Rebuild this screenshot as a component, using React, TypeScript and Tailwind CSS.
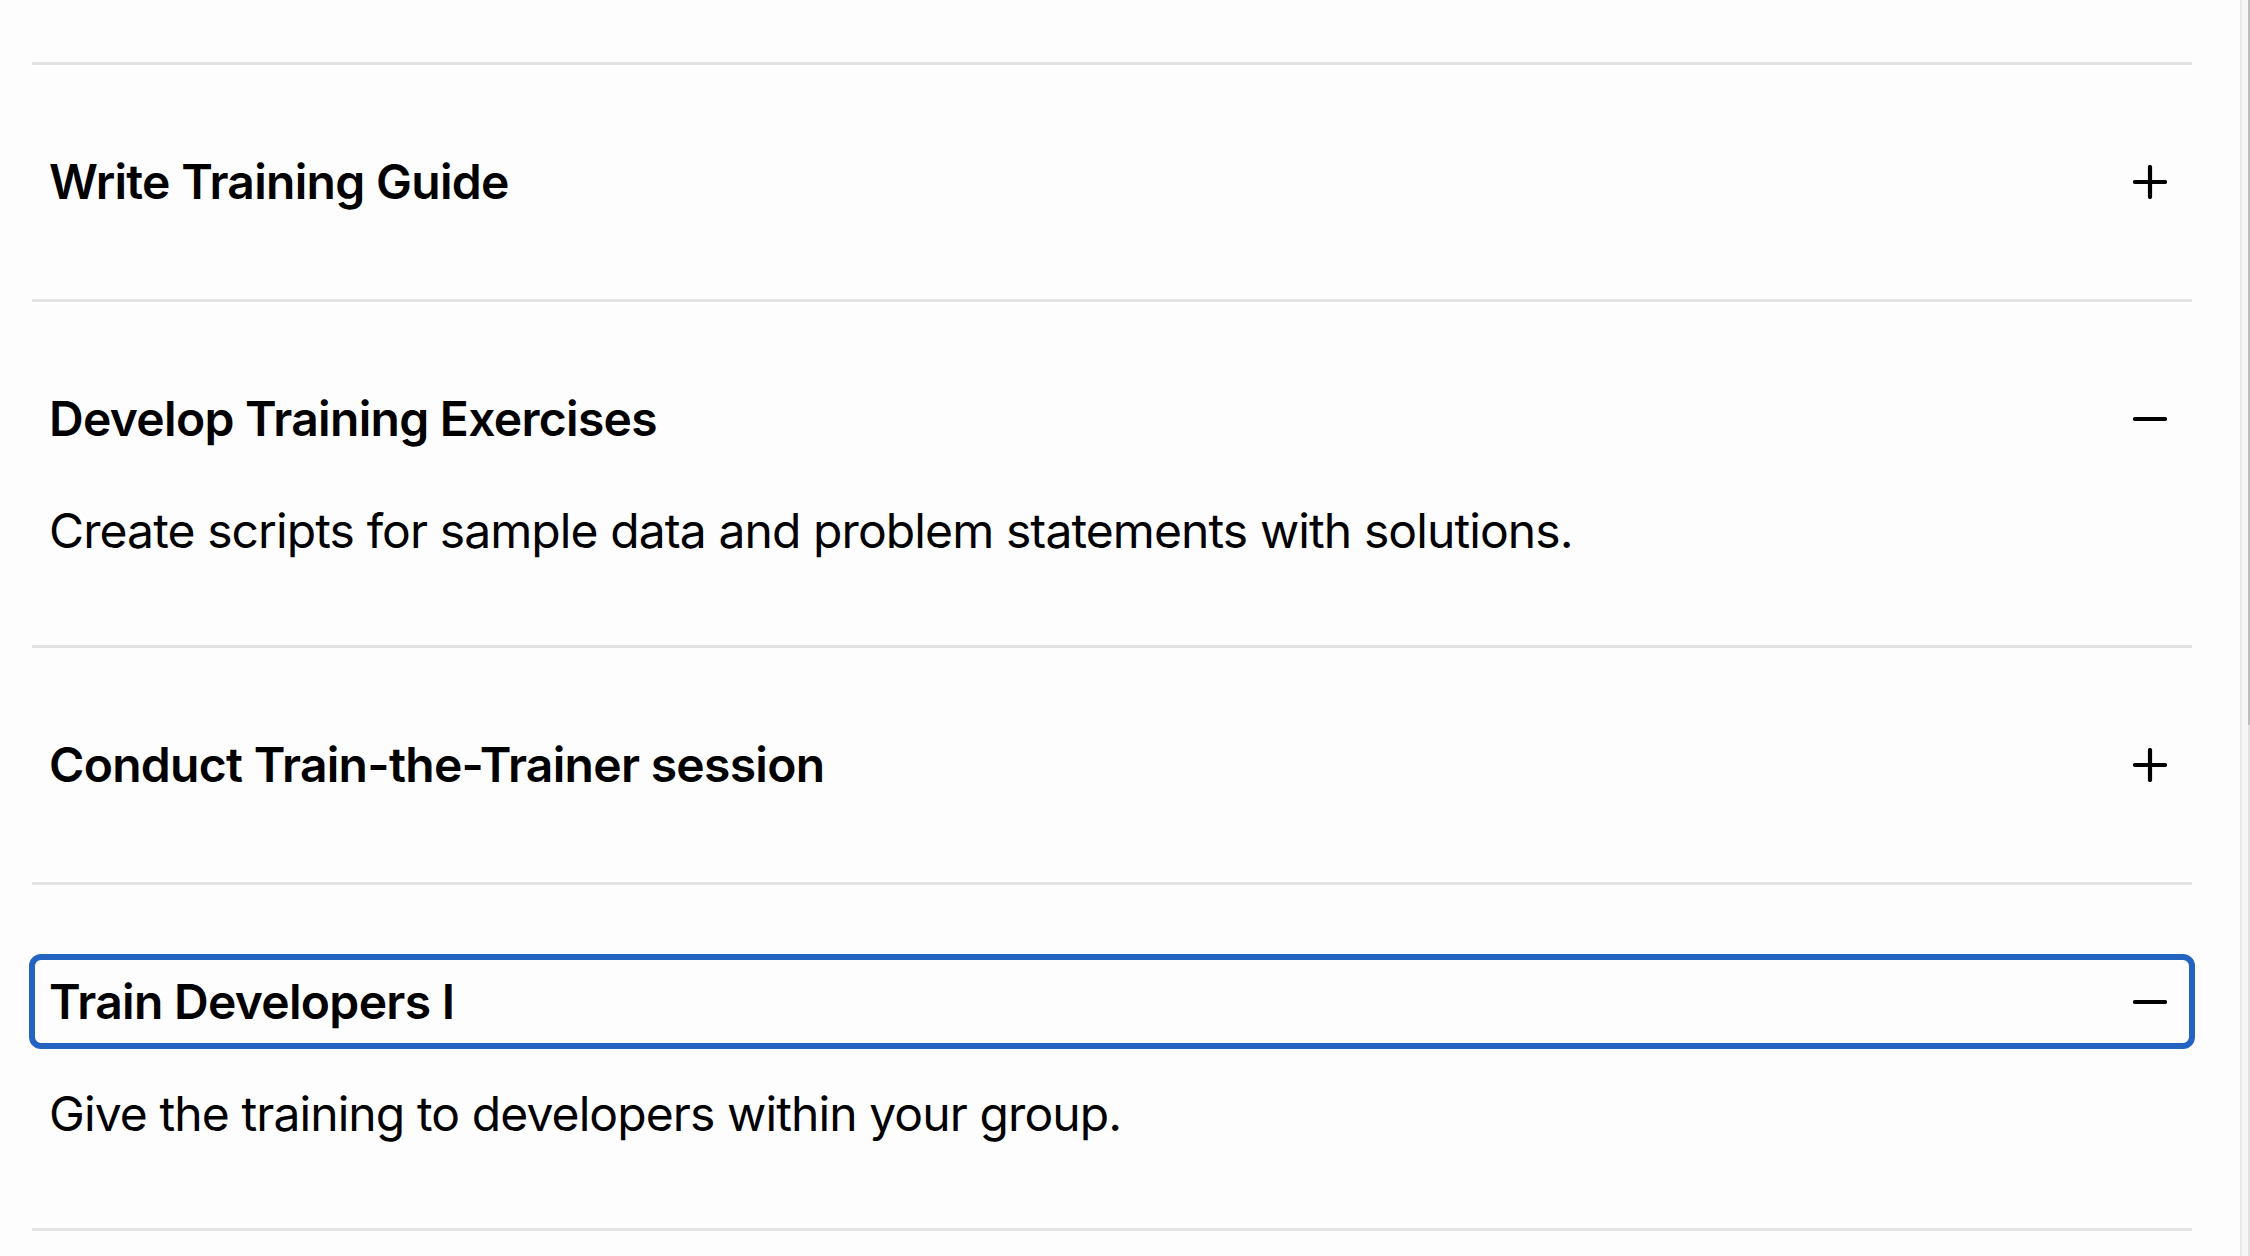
import React from "react";

type Item = { title: string; desc?: string; open: boolean; focused?: boolean };

const items: Item[] = [
  { title: "Write Training Guide", open: false },
  {
    title: "Develop Training Exercises",
    desc: "Create scripts for sample data and problem statements with solutions.",
    open: true,
  },
  { title: "Conduct Train-the-Trainer session", open: false },
  {
    title: "Train Developers I",
    desc: "Give the training to developers within your group.",
    open: true,
    focused: true,
  },
];

function PlusIcon() {
  return (
    <svg width="34" height="34" viewBox="0 0 34 34" fill="none">
      <line x1="17" y1="2" x2="17" y2="32" stroke="#000" strokeWidth="4.2" strokeLinecap="round" />
      <line x1="2" y1="17" x2="32" y2="17" stroke="#000" strokeWidth="4.2" strokeLinecap="round" />
    </svg>
  );
}

function MinusIcon() {
  return (
    <svg width="34" height="34" viewBox="0 0 34 34" fill="none">
      <line x1="2" y1="17" x2="32" y2="17" stroke="#000" strokeWidth="4.2" strokeLinecap="round" />
    </svg>
  );
}

export default function App() {
  return (
    <div
      className="flex w-full h-[1256px] overflow-hidden bg-[#fdfdfd] text-black"
      style={{ fontFamily: "Inter, 'Noto Sans', sans-serif" }}
    >
      <div className="flex-1 pl-[32px] pr-[48px] pt-[62px]">
        <div className="border-t-[3px] border-[#e3e3e3]">
          {items.map((it) => (
            <div key={it.title} className="border-b-[3px] border-[#e3e3e3] pt-[69px] pb-[70px]">
              <div
                className={
                  "mx-[-3px] h-[95px] flex items-center justify-between rounded-[12px] border-[6px] pl-[14px] pr-[22px] " +
                  (it.focused ? "border-[#2464c0]" : "border-transparent")
                }
              >
                <span className="text-[48px] leading-[60px] font-semibold tracking-[-0.7px]">{it.title}</span>
                {it.open ? <MinusIcon /> : <PlusIcon />}
              </div>
              {it.open && it.desc ? (
                <div className="mt-[21px] pl-[17px] text-[48px] leading-[88px] font-normal tracking-[-0.9px]">
                  {it.desc}
                </div>
              ) : null}
            </div>
          ))}
        </div>
      </div>
      <div className="w-[10px] h-full flex border-l-[2px] border-[#e8e8e8] bg-[#f6f6f6]">
        <div className="flex-1" />
        <div className="w-[2px] flex flex-col">
          <div className="h-[725px] bg-[#bdbdbd]" />
          <div className="flex-1 bg-[#e0e0e0]" />
        </div>
      </div>
    </div>
  );
}
